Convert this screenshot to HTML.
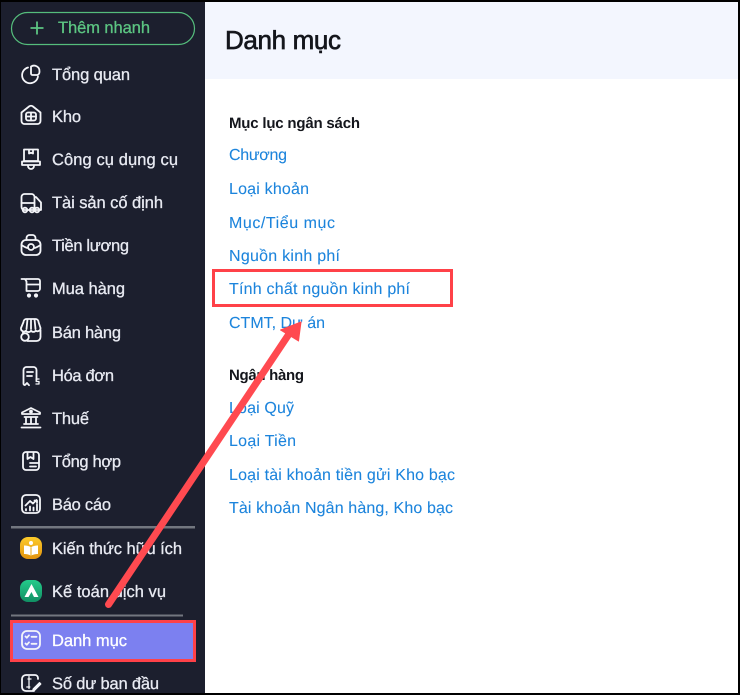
<!DOCTYPE html>
<html lang="vi"><head><meta charset="utf-8"><title>Danh mục</title>
<style>html,body{margin:0;padding:0;background:#000;width:740px;height:695px;overflow:hidden}svg{display:block}
text{font-family:"Liberation Sans",sans-serif;text-rendering:geometricPrecision}
.n{font-size:16.5px;fill:#e8eaf2;stroke:#e8eaf2;stroke-width:.3}
.l{font-size:16px;fill:#1c84dc;stroke:#1c84dc;stroke-width:.08}
.h{font-size:15px;font-weight:700;fill:#14161c}
.i{fill:none;stroke:#f4f5f9;stroke-width:1.8;stroke-linecap:round;stroke-linejoin:round}
</style></head><body>
<svg width="740" height="695" viewBox="0 0 740 695" xmlns="http://www.w3.org/2000/svg">
<rect width="740" height="695" fill="#000"/>
<rect x="1" y="2" width="737" height="691" fill="#fff"/>
<rect x="205" y="2" width="533" height="77" fill="#f3f6fe"/>
<rect x="1" y="2" width="204" height="691" fill="#1c1f2e"/>

<rect x="11.500" y="12.500" width="183" height="32" rx="16" fill="none" stroke="#55bd7c" stroke-width="1.2"/>
<path d="M37 21.500V34.500M30.500 28H43.500" stroke="#5cc582" stroke-width="1.8" fill="none"/>
<text x="58" y="33" class="n" style="fill:#5cc582;stroke:#5cc582" textLength="92" lengthAdjust="spacing">Thêm nhanh</text>

<g class="i">
<path d="M28 67.500A8 8 0 1 0 38 76.500"/><path d="M31 66.500a5.500 5.500 0 0 1 8.500 5c0 1.500-.8 3-2 3.500h-5a1.500 1.500 0 0 1-1.500-1.500z"/>
<path d="M21.500 112.500 29 106.500a3.200 3.200 0 0 1 4 0l7.500 6v8.500a3 3 0 0 1-3 3H24.500a3 3 0 0 1-3-3z"/><rect x="26" y="112.500" width="10" height="8" rx="2"/><path d="M31 112.500v8M26 116.500h10"/>
<path d="M24 149.500h14v11.500H24zM29 149.500v4l2-.8 2 .8V149.500M22 161.500h18v3.500H22zM28 165v1a3 3 0 0 0 6 0v-1"/>
<path d="M21.500 197a3 3 0 0 1 3-3h7a3 3 0 0 1 3 3v13H24.500a3 3 0 0 1-3-3zM34.500 197h1.500l5 5.500v7.500h-6.500M26.500 210h3"/><circle cx="25" cy="210" r="2.300"/><circle cx="32" cy="210" r="2.300"/><circle cx="37" cy="210" r="2.300"/><path d="M21.500 203h13"/>
<rect x="21.500" y="240" width="19" height="15" rx="4.500"/><path d="M26.500 240v-2a3 3 0 0 1 3-3h3a3 3 0 0 1 3 3v2M21.500 245c3 2 5.500 3 6.500 3M40.500 245c-3 2-5.500 3-6.500 3"/><circle cx="31" cy="247" r="3"/>
<path d="M21.500 279h3.500l1.500 2.500v9.500h11a2.500 2.500 0 0 0 2.500-2.500v-7.500a2 2 0 0 0-2-2H26M27 284.500h13"/><circle cx="29" cy="295.500" r="1.200" fill="#f4f5f9"/><circle cx="36" cy="295.500" r="1.200" fill="#f4f5f9"/>
<path d="M23.500 322a3 3 0 0 1 3-3h9a3 3 0 0 1 3 3l2 6a3 3 0 0 1-4.700 2.700 3 3 0 0 1-4.800 0 3 3 0 0 1-5 0 3 3 0 0 1-5-2.700zM27.500 319l-1 10M34.500 319l1 10M31 319v10M23 331.500v1.500M27.500 341h9a4 4 0 0 0 4-4v-7"/><circle cx="25" cy="337" r="3.800"/>
<path d="M36.500 380v-10a3 3 0 0 0-3-3h-7a3 3 0 0 0-3 3v13.500c0 1.500 1.500 2 2 1l1.500-1.500 2 2.200M27 372h6M27 376h5"/><path d="M39 379h-2.800v2.500H39V384h-3" stroke-width="1.300"/>
<path d="M22 412.500 31 408l9 4.500v1.500H22zM24.500 417h13M26 417v7M31 417v7M36 417v7M24 424h14M21.500 427.500h19"/><circle cx="31" cy="411.500" r="1" fill="#f4f5f9"/>
<path d="M26 452h10a3 3 0 0 1 3 3v12a3 3 0 0 1-3 3H26a3 3 0 0 1-3-3v-12a3 3 0 0 1 3-3zM27.500 452v7l3-2 3 2v-7M30 463h9M30 466.500h6"/>
<rect x="22" y="495" width="18" height="18" rx="4"/><path d="M25.500 505.500 30 501l3 2.500 3.500-3.500M34.500 500.500h2.500V503M26 510.500v-1.500M30 510.500v-4M33.500 510.500v-3M37 510.500v-6"/>
<path d="M38 679v-1a3 3 0 0 0-3-3H26a4 4 0 0 0-4 4v8a4 4 0 0 0 4 4h8M40.500 684l-6 6-1.500.5.500-1.500 6-6z"/><path d="M28 679h3M26.800 687h3M29 676.500v12" stroke-width="1.300"/>
</g>

<defs>
<linearGradient id="y" x1="0" y1="0" x2="0" y2="1"><stop offset="0" stop-color="#fdcb2a"/><stop offset="1" stop-color="#e2930f"/></linearGradient>
<linearGradient id="g" x1="0" y1="0" x2="0" y2="1"><stop offset="0" stop-color="#24cb8b"/><stop offset="1" stop-color="#118f63"/></linearGradient>
</defs>
<rect x="20" y="537" width="22" height="22" rx="8" fill="url(#y)"/>
<path d="M24 545.500c3 0 5.500.5 7 2 1.500-1.500 4-2 7-2v8.500c-3 0-5.500.5-7 2-1.500-1.500-4-2-7-2z" fill="#fff"/><path d="M31 547.500V556" stroke="#eaa915" stroke-width="1"/><circle cx="31" cy="543" r="2" fill="#fff"/>
<rect x="20" y="580" width="22" height="22" rx="8" fill="url(#g)"/>
<path d="M31.500 584 38.500 597H34L31.500 592 28.500 597H24.500Z" fill="#fff"/>

<rect x="11" y="526" width="184" height="2.500" fill="#72767f"/>
<rect x="11" y="614.500" width="172" height="2" fill="#72767f"/>
<rect x="11.500" y="621.500" width="183" height="39" fill="#7c80f0" stroke="#ff4148" stroke-width="3"/>
<g class="i"><rect x="22" y="631" width="18" height="18" rx="5"/><path d="M25.500 636.500l1.300 1.300 2.200-2.500M25.500 643.500l1.300 1.300 2.200-2.500M31.500 636.800h5M31.500 643.800h5"/></g>

<text x="52" y="80" class="n" textLength="78" lengthAdjust="spacing">Tổng quan</text>
<text x="52" y="122" class="n" textLength="29" lengthAdjust="spacing">Kho</text>
<text x="52" y="165" class="n" textLength="126" lengthAdjust="spacing">Công cụ dụng cụ</text>
<text x="52" y="208" class="n" textLength="111" lengthAdjust="spacing">Tài sản cố định</text>
<text x="52" y="251" class="n" textLength="77" lengthAdjust="spacing">Tiền lương</text>
<text x="52" y="294" class="n" textLength="73" lengthAdjust="spacing">Mua hàng</text>
<text x="52" y="338" class="n" textLength="69" lengthAdjust="spacing">Bán hàng</text>
<text x="52" y="381" class="n" textLength="62" lengthAdjust="spacing">Hóa đơn</text>
<text x="52" y="424" class="n" textLength="37" lengthAdjust="spacing">Thuế</text>
<text x="52" y="467" class="n" textLength="69" lengthAdjust="spacing">Tổng hợp</text>
<text x="52" y="510" class="n" textLength="59" lengthAdjust="spacing">Báo cáo</text>
<text x="52" y="554" class="n" textLength="130" lengthAdjust="spacing">Kiến thức hữu ích</text>
<text x="52" y="597" class="n" textLength="114" lengthAdjust="spacing">Kế toán dịch vụ</text>
<text x="52" y="646" class="n" style="fill:#fff;stroke:#fff" textLength="75" lengthAdjust="spacing">Danh mục</text>
<text x="52" y="689" class="n" textLength="107" lengthAdjust="spacing">Số dư ban đầu</text>

<text x="225" y="49" style="font-size:26px;fill:#14161c;stroke:#14161c;stroke-width:.65" textLength="116" lengthAdjust="spacing">Danh mục</text>
<text x="229" y="128" class="h" textLength="131" lengthAdjust="spacing">Mục lục ngân sách</text>
<text x="229" y="160" class="l" textLength="58" lengthAdjust="spacing">Chương</text>
<text x="229" y="194" class="l" textLength="80" lengthAdjust="spacing">Loại khoản</text>
<text x="229" y="228" class="l" textLength="106" lengthAdjust="spacing">Mục/Tiểu mục</text>
<text x="229" y="261" class="l" textLength="111" lengthAdjust="spacing">Nguồn kinh phí</text>
<text x="229" y="294" class="l" textLength="181" lengthAdjust="spacing">Tính chất nguồn kinh phí</text>
<text x="229" y="328" class="l" textLength="96" lengthAdjust="spacing">CTMT, Dự án</text>
<text x="229" y="380" class="h" textLength="75" lengthAdjust="spacing">Ngân hàng</text>
<text x="229" y="413" class="l" textLength="65" lengthAdjust="spacing">Loại Quỹ</text>
<text x="229" y="446" class="l" textLength="67" lengthAdjust="spacing">Loại Tiền</text>
<text x="229" y="480" class="l" textLength="226" lengthAdjust="spacing">Loại tài khoản tiền gửi Kho bạc</text>
<text x="229" y="513" class="l" textLength="224" lengthAdjust="spacing">Tài khoản Ngân hàng, Kho bạc</text>

<rect x="213.500" y="270.500" width="238" height="35" fill="none" stroke="#ff4148" stroke-width="3"/>
<path d="M108.500 604.500 289 334" stroke="#ff4a50" stroke-width="7" stroke-linecap="round" fill="none"/>
<path d="M301 322 298.500 341 280.500 330Z" fill="#ff4a50" stroke="#ff4a50" stroke-width="1" stroke-linejoin="round"/>
</svg>
</body></html>
